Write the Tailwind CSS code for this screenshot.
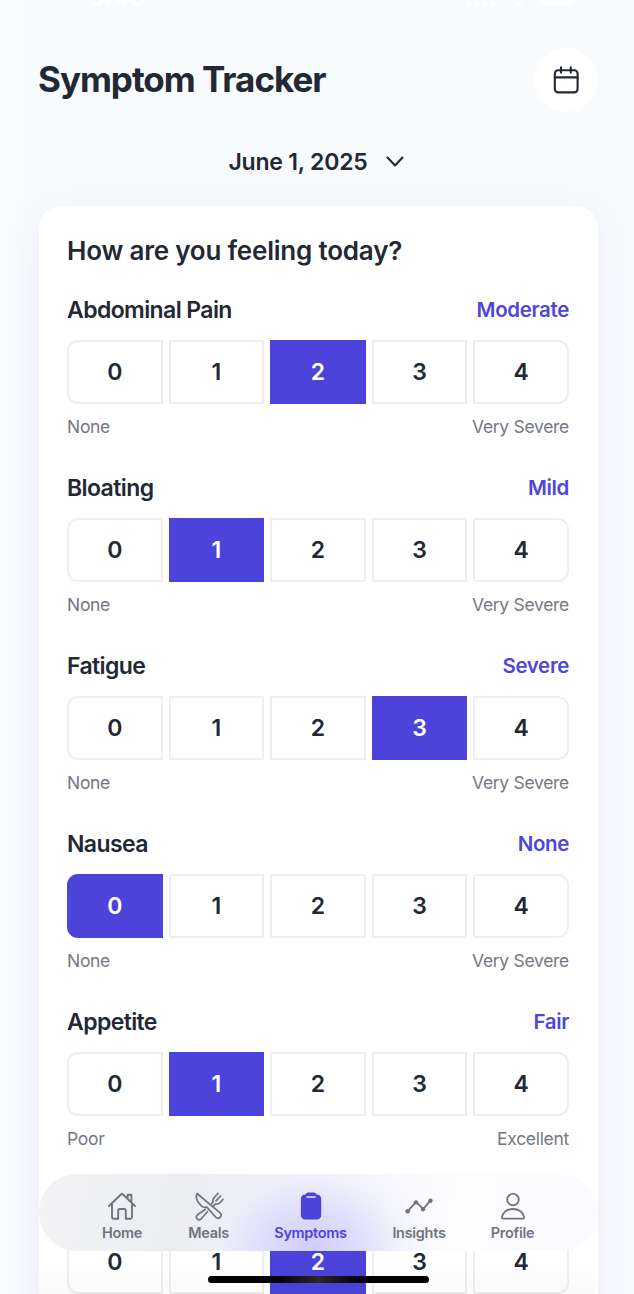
<!DOCTYPE html>
<html lang="en">
<head>
<meta charset="utf-8">
<title>Symptom Tracker</title>
<script src="https://cdn.jsdelivr.net/npm/@tailwindcss/browser@4"></script>
</head>
<body class="bg-[#f8fbfe]">
<div class="relative h-[1294px] w-[634px] overflow-hidden bg-linear-to-r from-[#fafbfe] via-[#f8fbfe] via-5% to-[#f8fbfe] font-['Inter',sans-serif] text-[#222834]">
  <!-- status bar, scrolled almost out of view -->
  <div class="flex h-[6px] items-end justify-between overflow-hidden pr-[58px] pl-[89px] text-[25px] leading-none font-semibold text-white">
    <span class="h-[21px]">9:45</span>
    <div class="flex items-end gap-[18px]">
      <div class="flex h-[5px] gap-[3px]"><i class="w-[5px] bg-white"></i><i class="w-[5px] bg-white"></i><i class="w-[5px] bg-white"></i><i class="w-[5px] bg-white"></i></div>
      <i class="h-[4px] w-[8px] rounded-b-full bg-white"></i>
      <i class="h-[6px] w-[36px] rounded-b-lg bg-white"></i>
    </div>
  </div>

  <header class="mt-[42px] flex h-16 items-center justify-between pr-[36px] pl-[38px]">
    <h1 class="pb-[2px] text-[35px] leading-none font-bold tracking-[-1.02px] whitespace-nowrap">Symptom Tracker</h1>
    <button class="flex size-16 items-center justify-center rounded-full bg-white shadow-[0_0_6px_rgba(255,250,248,0.9)]">
      <svg class="size-[30px]" viewBox="0 0 30 30" fill="none" stroke="#222834" stroke-width="2.1" stroke-linecap="round"><rect x="3.8" y="5.2" width="22.8" height="22.2" rx="3.4"/><path d="M3.8 12.4h22.8M10 2.2v5.4M19.8 2.2v5.4"/></svg>
    </button>
  </header>

  <div class="mt-[34px] flex h-8 items-center justify-center gap-[17px] pr-[1px] text-[23px] font-semibold tracking-[-0.2px]">
    <span>June 1, 2025</span>
    <svg class="h-[12px] w-[20px]" viewBox="0 0 20 12" fill="none" stroke="#222834" stroke-width="2.1" stroke-linecap="round" stroke-linejoin="round"><path d="M2.5 1.5 10 9.5l7.500-8"/></svg>
  </div>

  <main class="mt-[28px] ml-[39px] h-[1200px] w-[559px] rounded-[22px] bg-white px-7 pt-[28px] shadow-[0_10px_40px_rgba(80,50,110,0.08)]">
    <h2 class="h-[34px] text-[26px] leading-[34px] font-semibold tracking-[-0.2px] whitespace-nowrap">How are you feeling today?</h2>
    <div id="list" class="mt-[26px] pr-px"></div>
  </main>

  <div class="absolute inset-x-[39px] bottom-0 h-[44px] bg-linear-to-b from-transparent to-black/2"></div>

  <nav class="absolute top-[1174px] left-[39px] h-[77px] w-[559px] overflow-hidden rounded-[38px] bg-[#fbfbff] bg-[radial-gradient(ellipse_120px_95px_at_272px_75px,#cfcdfa_0%,#dedefb_40%,#eeeefd99_75%,transparent_100%),linear-gradient(100deg,#f3f3f5_0%,#ebedf0_25%,#eeeff6_38%,#f7f7fd_58%,#fdfdfe_75%,#fafaff_100%)] text-[14.500px] font-semibold tracking-[-0.3px] text-[#71747f]">
    <div class="flex h-full pt-[17px] pl-[36px] leading-[18px]">
      <div class="flex w-[94px] flex-col items-center gap-[3px]">
        <svg class="size-[30px]" viewBox="0 0 30 30" fill="none" stroke="currentColor" stroke-width="1.9" stroke-linecap="round" stroke-linejoin="round"><path d="M2 15 14.2 3.2q.8-.7 1.6 0L28 15M5 13v13.200q0 1.500 1.500 1.500h4.700v-8.200q0-1.500 1.500-1.500h4.600q1.500 0 1.500 1.500v8.200h4.700q1.500 0 1.500-1.500V13M20.700 7.500V3.800h3.700v7.200"/></svg>
        <span>Home</span>
      </div>
      <div class="flex w-[79px] flex-col items-center gap-[3px]">
        <svg class="size-[30px]" viewBox="0 0 30 30" fill="none" stroke="currentColor" stroke-width="1.7" stroke-linecap="round" stroke-linejoin="round"><path d="M3 2.500C1.200 7 4 12 8 15.300q2.200 1.800 4.800.8l8.800 9.900c3 3.100 7.400-1 4.500-4.200L3 2.500ZM11.200 18.500l-7.700 5.300c-2.800 2.600.5 6.600 3.500 4.200l6.500-7.300M17.500 12.600l1.600-1.700c-1.200-2.500 1.200-4.400 2.300-5.600L24 2.400M19.800 14.500l2-1.700c2.400 1 4-.8 5.200-2L29 8.500M22 9.800l4.600-4.800"/></svg>
        <span>Meals</span>
      </div>
      <div class="flex w-[125px] flex-col items-center gap-[3px] text-[#4b43da]">
        <svg class="size-[30px]" viewBox="0 0 30 30"><path fill="currentColor" d="M9.500 3.500Q10.300 1.400 12 1.400h6q1.700 0 2.500 2.100 4.700 0 4.700 4.700v15.500q0 4.800-4.800 4.800H9.700q-4.800 0-4.800-4.800V8.200q0-4.700 4.600-4.700Z"/><path d="M11 6h8" stroke="#e8e6ff" stroke-width="1.6" stroke-linecap="round"/></svg>
        <span>Symptoms</span>
      </div>
      <div class="flex w-[92px] flex-col items-center gap-[3px]">
        <svg class="size-[30px]" viewBox="0 0 30 30" fill="none" stroke="currentColor" stroke-width="1.8"><path d="M3.500 20.300 12 11l7.300 7 7-8.300"/><g fill="currentColor" stroke="none"><circle cx="3.600" cy="20.300" r="2.300"/><circle cx="12" cy="11.400" r="2.200"/><circle cx="19" cy="18.200" r="2.200"/><circle cx="26.500" cy="9.800" r="2.200"/></g></svg>
        <span>Insights</span>
      </div>
      <div class="flex w-[95px] flex-col items-center gap-[3px]">
        <svg class="size-[30px]" viewBox="0 0 30 30" fill="none" stroke="currentColor" stroke-width="1.8"><circle cx="15" cy="8.600" r="5.800"/><path d="M5.200 27.600q-1.400 0-1.300-1.400C4.600 21.300 9 18 15 18s10.400 3.300 11.100 8.200q.1 1.400-1.300 1.400Z"/></svg>
        <span>Profile</span>
      </div>
    </div>
  </nav>

  <div class="absolute top-[1276px] left-[208px] h-[7px] w-[221px] rounded-full bg-linear-to-r from-black from-20% via-[#29292c] to-black to-80%"></div>
</div>

<script>
const rows = [
  ["Abdominal Pain", "Moderate", 2, "None", "Very Severe"],
  ["Bloating", "Mild", 1, "None", "Very Severe"],
  ["Fatigue", "Severe", 3, "None", "Very Severe"],
  ["Nausea", "None", 0, "None", "Very Severe"],
  ["Appetite", "Fair", 1, "Poor", "Excellent"],
  ["", "", 2, "", ""],
];
document.getElementById("list").innerHTML = rows.map(([name, level, sel, lo, hi]) => `
  <section class="h-[178px]">
    <div class="flex h-[30px] items-center justify-between pt-[2px] font-semibold">
      <h3 class="text-[23px] tracking-[-0.6px]">${name}</h3>
      <span class="text-[20.5px] tracking-[-0.35px] text-[#4f46dc]">${level}</span>
    </div>
    <div class="mt-[16px] grid h-16 grid-cols-5 gap-[6px] text-[23px] font-semibold">
      ${[0, 1, 2, 3, 4].map(n => `<button class="border-2 pt-px ${n === 0 ? "rounded-l-[11px]" : n === 4 ? "rounded-r-[11px]" : ""} ${n === sel ? "border-[#4b43da] bg-[#4b43da] text-white" : "border-[#efeff0] bg-white"}">${n}</button>`).join("")}
    </div>
    <div class="mt-[11px] flex h-6 items-center justify-between text-[17.5px] tracking-[-0.3px] text-[#757882]"><span>${lo}</span><span>${hi}</span></div>
  </section>`).join("");
</script>
</body>
</html>
